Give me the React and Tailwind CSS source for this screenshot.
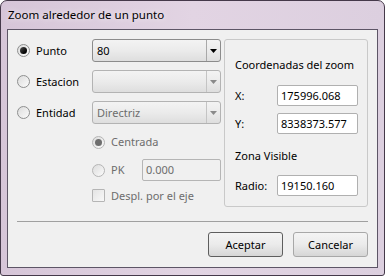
import React from 'react';

const font = { fontFamily: '"Noto Sans", "Open Sans", sans-serif' };

function Radio({ checked, disabled }) {
  return (
    <span
      className={`relative flex h-[13px] w-[13px] shrink-0 items-center justify-center rounded-full border bg-gradient-to-br from-[#dcdcdc] to-[#fbfbfb] ${disabled ? 'border-[#b5b5b5]' : 'border-[#8e8f8f]'}`}
    >
      {checked && (
        <span className={`h-[7px] w-[7px] rounded-full ${disabled ? 'bg-[#6e6e6e]' : 'bg-gradient-to-br from-[#555] to-[#000]'}`} />
      )}
    </span>
  );
}

function Combo({ value, disabled }) {
  return (
    <div className={`ml-auto flex h-[23px] w-[129px] rounded-[3px] border bg-gradient-to-b from-[#f3f3f3] via-[#ebebeb] to-[#dedede] ${disabled ? 'border-[#b3b3b3]' : 'border-[#8c8c8c]'}`}>
      <div className={`flex flex-1 items-center pl-[4px] ${disabled ? 'text-[#6d6d6d]' : 'text-black'}`}>{value}</div>
      <div className={`flex w-[14px] items-center justify-center border-l ${disabled ? 'border-[#c4c4c4]' : 'border-[#a8a8a8]'}`}>
        <svg width="7" height="4" viewBox="0 0 7 4">
          <path d="M0 0h7L3.5 4z" fill={disabled ? '#8a8a8a' : '#000'} />
        </svg>
      </div>
    </div>
  );
}

function Field({ value, disabled, className = '' }) {
  return (
    <div className={`flex h-[21px] items-center rounded-[2px] border pl-[3px] ${disabled ? 'border-[#b5b5b5] bg-[#f0f0f0] text-[#6d6d6d]' : 'border-[#b0b0b0] bg-white text-black'} ${className}`}>
      {value}
    </div>
  );
}

function Button({ children, isDefault }) {
  return (
    <button className={`flex h-[25px] w-[75px] items-center justify-center rounded-[3px] border bg-gradient-to-b from-[#f4f4f4] via-[#ebebeb] to-[#d6d6d6] text-black ${isDefault ? 'border-[#5e5e5e]' : 'border-[#a8a8a8]'}`}>
      {children}
    </button>
  );
}

export default function App() {
  return (
    <div className="h-[276px] w-[385px] whitespace-nowrap text-[11px] leading-[16px]" style={font}>
      <div className="flex h-full flex-col rounded-t-[7px] rounded-b-[3px] border border-[#45394a] bg-gradient-to-r from-[#d6c5d8] via-[#e2d4e3] to-[#dccfdf] px-[6px] pb-[7px]">
        {/* Title bar */}
        <div className="flex h-[28px] items-center pl-[1px] text-[11.5px] text-black [text-shadow:0_0_6px_rgba(255,255,255,0.9)]">
          Zoom alrededor de un punto
        </div>

        {/* Client area */}
        <div className="flex flex-1 flex-col border border-[#5d5566] bg-[#f0f0f0] px-[9px] pt-[9px]">
          <div className="flex">
            {/* Left column */}
            <div className="flex w-[204px] flex-col">
              <div className="flex h-[23px] items-center">
                <Radio checked />
                <span className="ml-[6px]">Punto</span>
                <Combo value="80" />
              </div>
              <div className="mt-[8px] flex h-[23px] items-center">
                <Radio />
                <span className="ml-[6px]">Estacion</span>
                <Combo value="" disabled />
              </div>
              <div className="mt-[8px] flex h-[23px] items-center">
                <Radio />
                <span className="ml-[6px]">Entidad</span>
                <Combo value="Directriz" disabled />
              </div>

              <div className="pl-[75px] text-[#6d6d6d]">
                <div className="mt-[7px] flex h-[22px] items-center">
                  <Radio checked disabled />
                  <span className="ml-[6px]">Centrada</span>
                </div>
                <div className="mt-[6px] flex h-[22px] items-center">
                  <Radio disabled />
                  <span className="ml-[6px]">PK</span>
                  <Field value="0.000" disabled className="ml-auto h-[22px] w-[79px]" />
                </div>
                <div className="mt-[8px] flex h-[13px] items-center">
                  <span className="h-[13px] w-[13px] rounded-[1px] border border-[#b5b5b5] bg-gradient-to-br from-[#e4e4e4] to-[#f8f8f8]" />
                  <span className="ml-[6px]">Despl. por el eje</span>
                </div>
              </div>
            </div>

            {/* Group box */}
            <div className="ml-[3px] flex h-[168px] w-[144px] flex-col rounded-[3px] border border-[#c9c9c9] pl-[10px] pr-[9px] pt-[17px]">
              <div>Coordenadas del zoom</div>
              <div className="mt-[12px] flex items-center">
                <span>X:</span>
                <Field value="175996.068" className="ml-auto w-[81px]" />
              </div>
              <div className="mt-[7px] flex items-center">
                <span>Y:</span>
                <Field value="8338373.577" className="ml-auto w-[81px]" />
              </div>
              <div className="mt-[14px]">Zona Visible</div>
              <div className="mt-[11px] flex items-center">
                <span>Radio:</span>
                <Field value="19150.160" className="ml-auto w-[81px]" />
              </div>
            </div>
          </div>

          <div className="mt-[14px] h-px bg-[#a0a0a0]" />

          <div className="mt-[10px] flex justify-end gap-[10px]">
            <Button isDefault>Aceptar</Button>
            <Button>Cancelar</Button>
          </div>
        </div>
      </div>
    </div>
  );
}
